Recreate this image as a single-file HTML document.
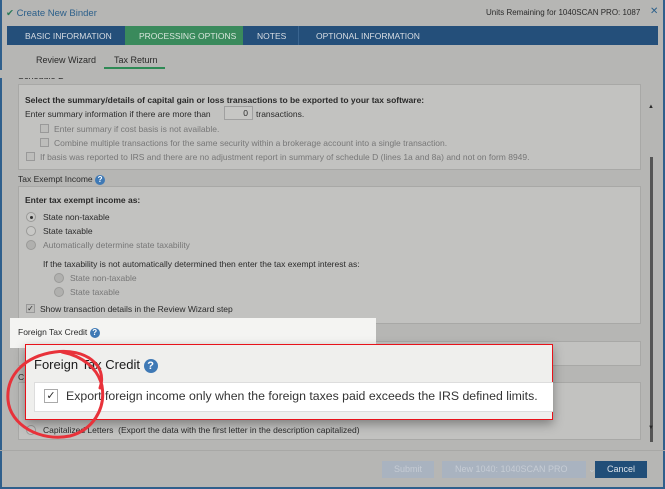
<!DOCTYPE html>
<html><head><meta charset="utf-8"><style>
*{margin:0;padding:0;box-sizing:border-box}
body{width:665px;height:489px;overflow:hidden;background:#b6b6b4;font-family:"Liberation Sans",sans-serif;font-size:8.5px;color:#2a2a2a;position:relative}
.a{position:absolute;white-space:nowrap}
.box{position:absolute;background:#c2c2c0;border:1px solid #a8a8a6}
.cb{position:absolute;width:9px;height:9px;border:1px solid #999;background:#bdbdbb}
.rd{position:absolute;width:10px;height:10px;border-radius:50%;border:1px solid #9a9a98;background:#c8c8c6}
.g{color:#777}
.q{display:inline-block;width:10px;height:10px;border-radius:50%;background:#3f79b5;color:#fff;font-size:8px;text-align:center;line-height:10px;font-weight:bold;vertical-align:middle}
</style></head><body>
<div class="a" style="left:0;top:0;width:665px;height:489px;border:2px solid #2f5f8c;border-top:none"></div>
<div class="a" style="left:6px;top:8px;color:#2b5f8a;font-size:9.5px"><span style="color:#2a7a5a">&#x2714;</span> Create New Binder</div>
<div class="a" style="left:486px;top:8px;font-size:8px">Units Remaining for 1040SCAN PRO: 1087</div>
<div class="a" style="left:650px;top:6px;color:#2b5f8a;font-size:10px">✕</div>
<div class="a" style="left:7px;top:26px;width:651px;height:19px;background:#244f7a"></div>
<div class="a" style="left:125px;top:26px;width:118px;height:19px;background:#3a8a5c"></div>
<div class="a" style="left:25px;top:31px;color:#d8dde3;font-size:8.5px">BASIC INFORMATION</div>
<div class="a" style="left:139px;top:31px;color:#d8e6dc;font-size:8.5px">PROCESSING OPTIONS</div>
<div class="a" style="left:257px;top:31px;color:#d8dde3;font-size:8.5px">NOTES</div>
<div class="a" style="left:298px;top:26px;width:1px;height:19px;background:#3a6590"></div>
<div class="a" style="left:316px;top:31px;color:#d8dde3;font-size:8.5px">OPTIONAL INFORMATION</div>
<div class="a" style="left:36px;top:55px;font-size:9px">Review Wizard</div>
<div class="a" style="left:114px;top:55px;font-size:9px">Tax Return</div>
<div class="a" style="left:104px;top:67px;width:61px;height:2px;background:#2e8a55"></div>
<div class="a" style="left:18px;top:71px;font-size:9px">Schedule D</div>
<div class="a" style="left:0;top:70px;width:650px;height:8px;background:#b6b6b4"></div>
<div class="box" style="left:18px;top:84px;width:623px;height:86px"></div>
<div class="a" style="left:25px;top:95px;font-weight:bold">Select the summary/details of capital gain or loss transactions to be exported to your tax software:</div>
<div class="a" style="left:25px;top:109px">Enter summary information if there are more than</div>
<div class="a" style="left:224px;top:106px;width:29px;height:14px;border:1px solid #a0a0a0;background:#c6c6c4;text-align:right;padding-right:4px;line-height:12px">0</div>
<div class="a" style="left:256px;top:109px">transactions.</div>
<div class="cb" style="left:40px;top:124px"></div><div class="a g" style="left:54px;top:124px">Enter summary if cost basis is not available.</div>
<div class="cb" style="left:40px;top:138px"></div><div class="a g" style="left:54px;top:138px">Combine multiple transactions for the same security within a brokerage account into a single transaction.</div>
<div class="cb" style="left:26px;top:152px"></div><div class="a g" style="left:40px;top:152px">If basis was reported to IRS and there are no adjustment report in summary of schedule D (lines 1a and 8a) and not on form 8949.</div>
<div class="a" style="left:18px;top:174px">Tax Exempt Income <span class="q">?</span></div>
<div class="box" style="left:18px;top:186px;width:623px;height:138px"></div>
<div class="a" style="left:25px;top:195px;font-weight:bold">Enter tax exempt income as:</div>
<div class="rd" style="left:26px;top:212px"><div style="width:3px;height:3px;background:#333;border-radius:50%;margin:2.5px"></div></div><div class="a" style="left:43px;top:212px">State non-taxable</div>
<div class="rd" style="left:26px;top:226px"></div><div class="a" style="left:43px;top:226px">State taxable</div>
<div class="rd" style="left:26px;top:240px;background:#b0b0ae"></div><div class="a g" style="left:43px;top:240px">Automatically determine state taxability</div>
<div class="a" style="left:43px;top:259px">If the taxability is not automatically determined then enter the tax exempt interest as:</div>
<div class="rd" style="left:54px;top:273px;background:#b0b0ae"></div><div class="a g" style="left:70px;top:273px">State non-taxable</div>
<div class="rd" style="left:54px;top:287px;background:#b0b0ae"></div><div class="a g" style="left:70px;top:287px">State taxable</div>
<div class="cb" style="left:26px;top:304px;font-size:8px;line-height:7px;text-align:center">✓</div><div class="a" style="left:40px;top:304px">Show transaction details in the Review Wizard step</div>
<div class="box" style="left:18px;top:341px;width:623px;height:25px"></div>
<div class="a" style="left:18px;top:372px">C</div>
<div class="box" style="left:18px;top:382px;width:623px;height:58px"></div>
<div class="rd" style="left:26px;top:425px"></div><div class="a" style="left:43px;top:425px;font-size:8.5px">Capitalized Letters &nbsp;(Export the data with the first letter in the description capitalized)</div>
<div class="a" style="left:648px;top:104px;font-size:6px">▲</div>
<div class="a" style="left:650px;top:157px;width:3px;height:285px;background:#555"></div>
<div class="a" style="left:648px;top:425px;font-size:6px">▼</div>
<div class="a" style="left:10px;top:318px;width:366px;height:30px;background:#f4f4f2"></div>
<div class="a" style="left:18px;top:327px;font-size:8.5px">Foreign Tax Credit <span class="q">?</span></div>
<div class="a" style="left:25px;top:344px;width:528px;height:76px;background:#efefed;border:1px solid #e8121a;box-shadow:0 4px 10px rgba(0,0,0,.35)"></div>
<div class="a" style="left:34px;top:357px;font-size:13px;color:#1a1a1a">Foreign Tax Credit <span class="q" style="width:14px;height:14px;line-height:14px;font-size:11px">?</span></div>
<div class="a" style="left:34px;top:382px;width:519px;height:30px;background:#fff;border:1px solid #ddd;border-right:none"></div>
<div class="a" style="left:44px;top:389px;width:14px;height:14px;border:1px solid #aaa;font-size:11px;line-height:12px;text-align:center">✓</div>
<div class="a" style="left:66px;top:389px;font-size:12.3px;color:#333">Export foreign income only when the foreign taxes paid exceeds the IRS defined limits.</div>
<svg class="a" style="left:0;top:340px" width="120" height="110"><path d="M100 48 C108 25 85 8 55 12 C25 16 6 35 8 60 C10 85 40 102 70 96 C92 90 106 70 102 46 C98 28 82 16 62 12" fill="none" stroke="#e8323a" stroke-width="3" stroke-linecap="round"/></svg>
<div class="a" style="left:0;top:450px;width:665px;height:1px;background:#a8a8a6"></div>
<div class="a" style="left:382px;top:461px;width:52px;height:17px;background:#a9b3c0;color:#c6ccd4;text-align:center;line-height:17px;font-size:9px">Submit</div>
<div class="a" style="left:442px;top:461px;width:144px;height:17px;background:#a9b3c0;color:#c6ccd4;line-height:17px;font-size:9px;padding-left:13px">New 1040: 1040SCAN PRO <span style="margin-left:18px">⌄</span></div>
<div class="a" style="left:595px;top:461px;width:52px;height:17px;background:#214e78;color:#dde3ea;text-align:center;line-height:17px;font-size:9px">Cancel</div>
</body></html>
